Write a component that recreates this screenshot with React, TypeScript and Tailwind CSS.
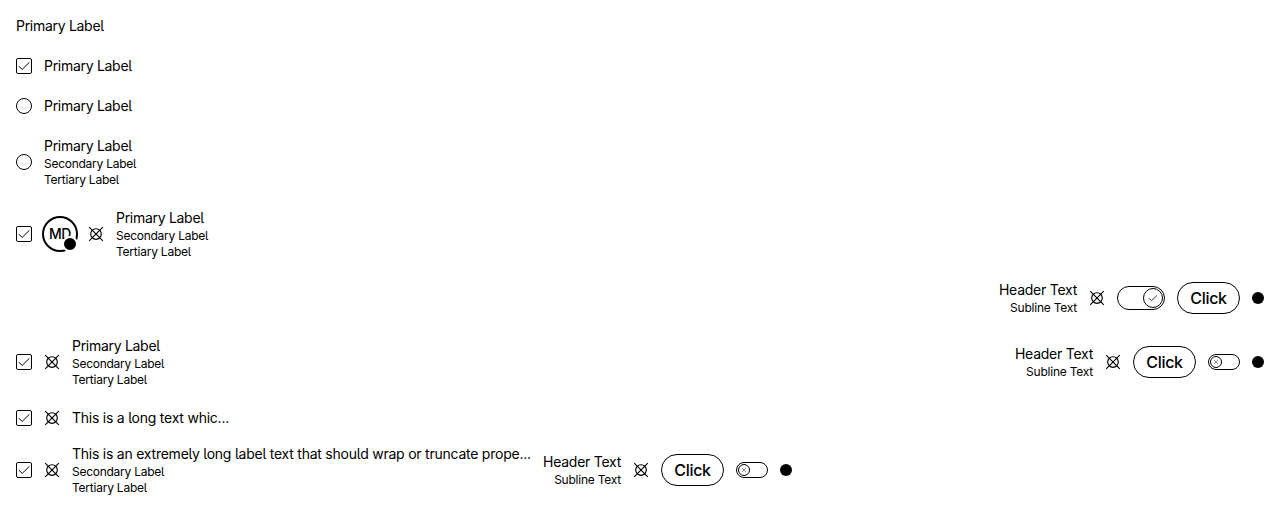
import type { ReactNode } from "react";

function Checkbox() {
  return (
    <span className="flex size-4 shrink-0 rounded-[2px] border border-black">
      <svg viewBox="0 0 14 14" className="size-3.5" fill="none" stroke="black" strokeWidth="1">
        <path d="M1.9 7.2 5.2 10.4 12.4 3.3" />
      </svg>
    </span>
  );
}

function Radio() {
  return <span className="size-4 shrink-0 rounded-full border border-black" />;
}

function Icon() {
  return (
    <svg viewBox="0 0 16 16" className="size-4 shrink-0" fill="none" stroke="black" strokeWidth="1.15">
      <circle cx="8" cy="8" r="5.3" />
      <path d="M1.2 1.2 14.8 14.8M14.8 1.2 1.2 14.8" />
    </svg>
  );
}

function Dot() {
  return <span className="size-3 shrink-0 rounded-full bg-black" />;
}

function Avatar() {
  return (
    <span className="relative -mx-0.5 flex size-9 shrink-0 items-center justify-center rounded-full border-2 border-black text-sm font-medium tracking-[-0.4px]">
      MD
      <span className="absolute -right-0.5 -bottom-0.5 size-4 rounded-full border-2 border-white bg-black" />
    </span>
  );
}

function Labels({ children, full = false, long = false }: { children: ReactNode; full?: boolean; long?: boolean }) {
  return (
    <div className="whitespace-nowrap [font-feature-settings:'cv05']">
      <div className={long ? "text-sm leading-5 tracking-[-0.235px]" : "text-sm leading-5 tracking-[-0.29px]"}>
        {children}
      </div>
      {full && (
        <div className="text-xs leading-4 tracking-[-0.26px]">
          <div>Secondary Label</div>
          <div className="tracking-[-0.23px]">Tertiary Label</div>
        </div>
      )}
    </div>
  );
}

function Header() {
  return (
    <div className="text-right whitespace-nowrap">
      <div className="text-sm leading-5 tracking-[-0.25px]">Header Text</div>
      <div className="text-xs leading-4 tracking-[-0.23px]">Subline Text</div>
    </div>
  );
}

function Button() {
  return (
    <button className="flex h-8 w-[63px] shrink-0 items-center justify-center rounded-full border border-black text-base font-medium tracking-[-0.32px]">
      Click
    </button>
  );
}

function LargeSwitch() {
  return (
    <span className="flex h-6 w-12 shrink-0 items-center justify-end rounded-full border border-black pr-px">
      <span className="flex size-5 items-center justify-center rounded-full border border-black">
        <svg viewBox="0 0 10 10" className="size-2.5" fill="none" stroke="black" strokeWidth="0.8">
          <path d="M1 5.2 3.5 7.7 9 2.4" />
        </svg>
      </span>
    </span>
  );
}

function SmallSwitch() {
  return (
    <span className="flex h-4 w-8 shrink-0 items-center rounded-full border border-black pl-px">
      <span className="flex size-3 items-center justify-center rounded-full border border-black">
        <svg viewBox="0 0 6 6" className="size-1.5" fill="none" stroke="black" strokeWidth="0.45">
          <path d="M1 1 5 5M5 1 1 5" />
        </svg>
      </span>
    </span>
  );
}

function Row({ className, children }: { className: string; children: ReactNode }) {
  return <div className={"flex items-center gap-3 px-4 " + className}>{children}</div>;
}

function Trailing({ children }: { children: ReactNode }) {
  return <div className="ml-auto flex shrink-0 items-center gap-3">{children}</div>;
}

export default function App() {
  return (
    <main className="h-[508px] overflow-hidden bg-white pt-1.5 font-['Inter',sans-serif] text-black">
      <Row className="h-10"><Labels>Primary Label</Labels></Row>
      <Row className="h-10"><Checkbox /><Labels>Primary Label</Labels></Row>
      <Row className="h-10"><Radio /><Labels>Primary Label</Labels></Row>
      <Row className="h-18"><Radio /><Labels full>Primary Label</Labels></Row>
      <Row className="h-18"><Checkbox /><Avatar /><Icon /><Labels full>Primary Label</Labels></Row>
      <Row className="h-14">
        <Trailing><Header /><Icon /><LargeSwitch /><Button /><Dot /></Trailing>
      </Row>
      <Row className="h-18">
        <Checkbox /><Icon /><Labels full>Primary Label</Labels>
        <Trailing><Header /><Icon /><Button /><SmallSwitch /><Dot /></Trailing>
      </Row>
      <Row className="h-10"><Checkbox /><Icon /><Labels long>This is a long text whic...</Labels></Row>
      <Row className="h-16 w-[808px]">
        <Checkbox /><Icon />
        <div className="w-[459px] shrink-0">
          <Labels full long>This is an extremely long label text that should wrap or truncate prope...</Labels>
        </div>
        <Trailing><Header /><Icon /><Button /><SmallSwitch /><Dot /></Trailing>
      </Row>
    </main>
  );
}
